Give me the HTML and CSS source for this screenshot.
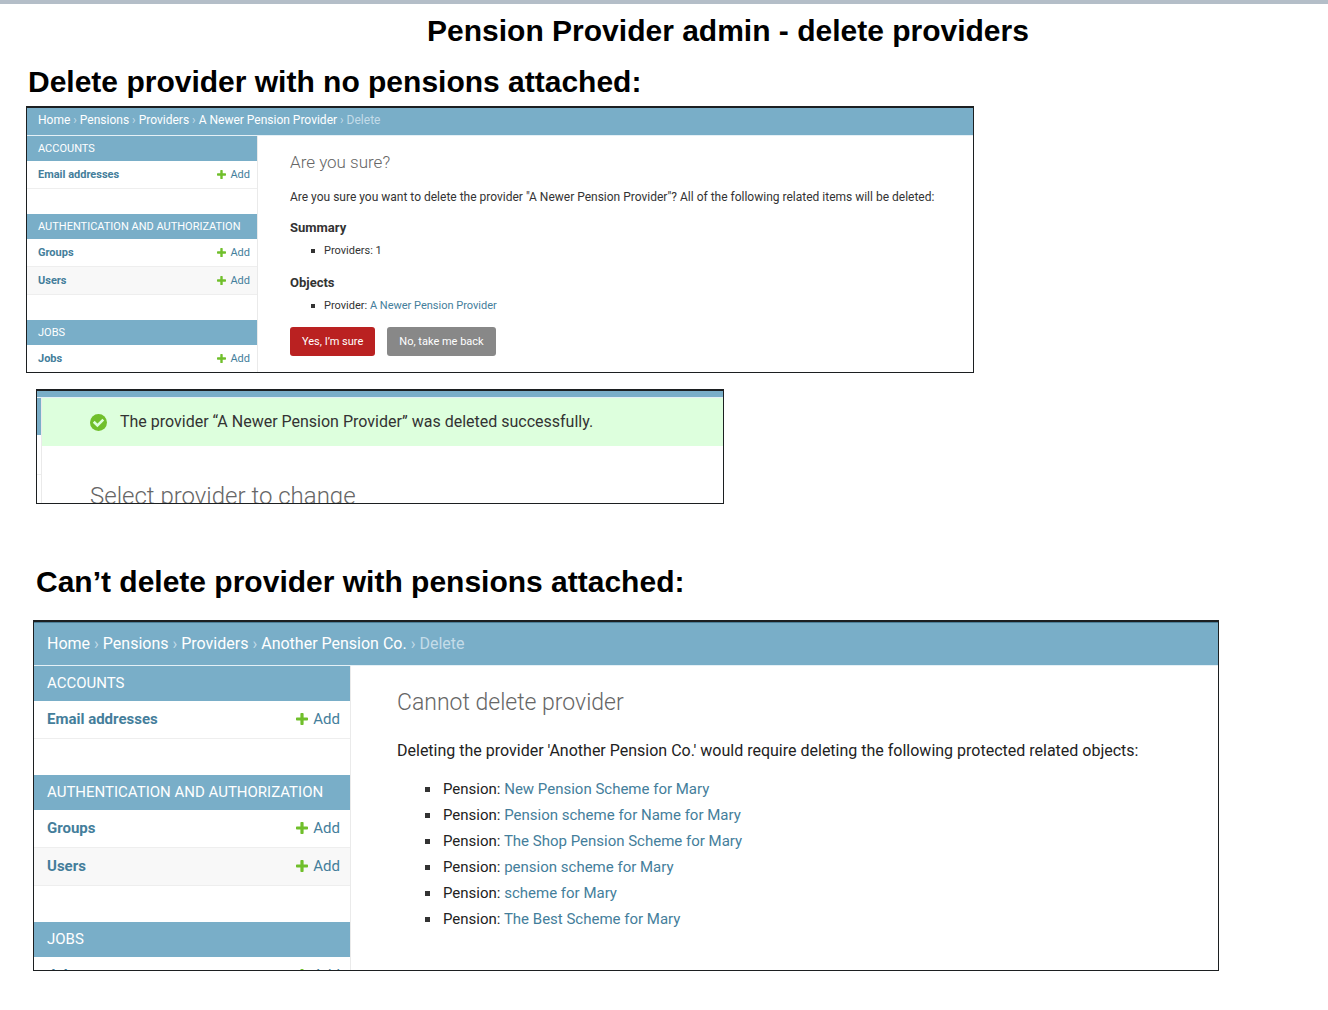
FILE: index.html
```html
<!DOCTYPE html>
<html lang="en">
<head>
<meta charset="utf-8">
<title>Pension Provider admin - delete providers</title>
<link rel="stylesheet" href="styles.css">
</head>
<body>
<svg class="sprite" aria-hidden="true">
  <symbol id="plus" viewBox="0 0 12 12"><path d="M4.4 0.8Q4.4 0 5.2 0h1.6q.8 0 .8.8v3.6h3.6q.8 0 .8.8v1.6q0 .8-.8.8H7.6v3.6q0 .8-.8.8H5.2q-.8 0-.8-.8V7.6H.8Q0 7.600 0 6.800V5.200q0-.8.8-.8h3.600z" fill="#70bf2b"/></symbol>
  <symbol id="tick" viewBox="0 0 16 16"><circle cx="8" cy="8" r="8" fill="#70bf2b"/><path d="M3.500 7.300l3.500 3.500 5.500-5.500" fill="none" stroke="#dfd" stroke-width="2.400"/></symbol>
</svg>
<header class="page-head"><h1 class="title">Pension Provider admin - delete providers</h1></header>
<main class="page">
  <h2 class="heading heading-first">Delete provider with no pensions attached:</h2>

  <section class="shot shot-confirm">
    <nav class="crumbs"><a href="#">Home</a> › <a href="#">Pensions</a> › <a href="#">Providers</a> › <a href="#">A Newer Pension Provider</a> › Delete</nav>
    <div class="columns">
      <nav class="side">
        <h3 class="app">ACCOUNTS</h3>
        <ul class="models">
          <li class="model"><a class="name" href="#">Email addresses</a><a class="add" href="#"><svg class="plus"><use href="#plus"/></svg>Add</a></li>
        </ul>
        <h3 class="app">AUTHENTICATION AND AUTHORIZATION</h3>
        <ul class="models">
          <li class="model"><a class="name" href="#">Groups</a><a class="add" href="#"><svg class="plus"><use href="#plus"/></svg>Add</a></li>
          <li class="model"><a class="name" href="#">Users</a><a class="add" href="#"><svg class="plus"><use href="#plus"/></svg>Add</a></li>
        </ul>
        <h3 class="app">JOBS</h3>
        <ul class="models">
          <li class="model"><a class="name" href="#">Jobs</a><a class="add" href="#"><svg class="plus"><use href="#plus"/></svg>Add</a></li>
        </ul>
      </nav>
      <div class="content">
        <h3 class="content-title">Are you sure?</h3>
        <p class="text">Are you sure you want to delete the provider "A Newer Pension Provider"? All of the following related items will be deleted:</p>
        <h4 class="subhead">Summary</h4>
        <ul class="items"><li>Providers: 1</li></ul>
        <h4 class="subhead">Objects</h4>
        <ul class="items"><li>Provider: <a href="#">A Newer Pension Provider</a></li></ul>
        <div class="actions">
          <button class="button danger" type="button">Yes, I’m sure</button>
          <button class="button" type="button">No, take me back</button>
        </div>
      </div>
    </div>
  </section>

  <section class="shot shot-success">
    <div class="bar"></div>
    <div class="columns">
      <div class="sliver"><div class="sliver-app"></div><div class="sliver-row"></div></div>
      <div class="result">
        <p class="message"><svg class="tick"><use href="#tick"/></svg>The provider “A Newer Pension Provider” was deleted successfully.</p>
        <h3 class="result-title">Select provider to change</h3>
      </div>
    </div>
  </section>

  <h2 class="heading heading-second">Can’t delete provider with pensions attached:</h2>

  <section class="shot shot-blocked">
    <nav class="crumbs"><a href="#">Home</a> › <a href="#">Pensions</a> › <a href="#">Providers</a> › <a href="#">Another Pension Co.</a> › Delete</nav>
    <div class="columns">
      <nav class="side">
        <h3 class="app">ACCOUNTS</h3>
        <ul class="models">
          <li class="model"><a class="name" href="#">Email addresses</a><a class="add" href="#"><svg class="plus"><use href="#plus"/></svg>Add</a></li>
        </ul>
        <h3 class="app">AUTHENTICATION AND AUTHORIZATION</h3>
        <ul class="models">
          <li class="model"><a class="name" href="#">Groups</a><a class="add" href="#"><svg class="plus"><use href="#plus"/></svg>Add</a></li>
          <li class="model"><a class="name" href="#">Users</a><a class="add" href="#"><svg class="plus"><use href="#plus"/></svg>Add</a></li>
        </ul>
        <h3 class="app">JOBS</h3>
        <ul class="models">
          <li class="model"><a class="name" href="#">Jobs</a><a class="add" href="#"><svg class="plus"><use href="#plus"/></svg>Add</a></li>
        </ul>
      </nav>
      <div class="content">
        <h3 class="content-title">Cannot delete provider</h3>
        <p class="text">Deleting the provider 'Another Pension Co.' would require deleting the following protected related objects:</p>
        <ul class="items">
          <li>Pension: <a href="#">New Pension Scheme for Mary</a></li>
          <li>Pension: <a href="#">Pension scheme for Name for Mary</a></li>
          <li>Pension: <a href="#">The Shop Pension Scheme for Mary</a></li>
          <li>Pension: <a href="#">pension scheme for Mary</a></li>
          <li>Pension: <a href="#">scheme for Mary</a></li>
          <li>Pension: <a href="#">The Best Scheme for Mary</a></li>
        </ul>
      </div>
    </div>
  </section>
</main>
</body>
</html>
```
FILE: styles.css
```css
* { box-sizing: border-box; margin: 0; padding: 0; }
body { background: #fff; color: #333; font-family: Roboto, "Liberation Sans", sans-serif; }
a { color: #447e9b; text-decoration: none; }
ul { list-style: none; }
.sprite { display: none; }

.page-head { border-top: 4px solid #b4bec8; padding: 9px 0 0 128px; }
.title, .heading {
  color: #000;
  font-family: "Liberation Sans", Arial, sans-serif;
  font-size: 30px;
  font-weight: 700;
  line-height: 36px;
}
.title { text-align: center; }
.page { padding: 15px 26px 40px; }
.heading-first { padding-left: 2px; margin-bottom: 6px; }
.heading-second { margin: 60px 0 20px 10px; }

.shot { border: solid #1c1f21; border-width: 2px 1px 1px; overflow: hidden; }
.columns { display: flex; align-items: stretch; }

.crumbs { background: #79aec8; color: #c4dce8; border-bottom: 1px solid #e4f0f6; }
.crumbs a { color: #fff; }
.side { flex: none; border-right: 1px solid #eaeaea; }
.app { background: #79aec8; color: #fff; font-weight: 400; }
.model { display: flex; align-items: center; justify-content: space-between; border-bottom: 1px solid #eee; }
.model:nth-child(even) { background: #f8f8f8; }
.name { font-weight: 700; }
.add { display: flex; align-items: center; }
.content { flex: 1; min-width: 0; }
.content-title, .result-title { color: #666; font-weight: 300; }
.items li { position: relative; }
.items li::before { content: ""; position: absolute; background: #333; }

/* Confirmation page, small scale */
.shot-confirm { max-width: 948px; max-height: 267px; font-size: 11px; }
.shot-confirm .crumbs { padding: 0 11px 2px; font-size: 12px; line-height: 25px; }
.shot-confirm .side { width: 231px; }
.shot-confirm .app { padding: 0 11px; font-size: 11px; line-height: 25px; }
.shot-confirm .model { height: 28px; padding: 0 7px 0 11px; }
.shot-confirm .models { margin-bottom: 25px; }
.shot-confirm .add { gap: 4px; }
.shot-confirm .plus { width: 9px; height: 9px; }
.shot-confirm .content { padding: 16px 32px 0; }
.shot-confirm .content-title { font-size: 17px; line-height: 20px; margin-bottom: 16px; }
.shot-confirm .text { font-size: 12px; line-height: 18px; }
.shot-confirm .subhead { font-size: 13px; line-height: 18px; margin: 13px 0 5px; }
.shot-confirm .items { padding-left: 34px; line-height: 18px; margin-bottom: 14px; }
.shot-confirm .items li::before { width: 4px; height: 4px; left: -13px; top: 7px; }
.actions { display: flex; gap: 12px; margin-top: -2px; }
.button {
  background: #888;
  border: 0;
  border-radius: 3px;
  color: #fff;
  font: 400 11px/29px Roboto, "Liberation Sans", sans-serif;
  padding: 0 12px;
}
.danger { background: #ba2121; }

/* Success message, cropped page */
.shot-success { max-width: 688px; height: 115px; margin: 16px 0 0 10px; }
.bar { height: 7px; background: #79aec8; border-bottom: 1px solid #e4f0f6; }
.sliver { width: 5px; flex: none; border-right: 1px solid #eaeaea; }
.sliver-app { height: 37px; background: #79aec8; }
.sliver-row { height: 40px; border-bottom: 1px solid #eee; }
.result { flex: 1; }
.message { display: flex; align-items: center; gap: 13px; background: #dfd; padding-left: 48px; font-size: 16px; line-height: 48px; }
.tick { width: 17px; height: 17px; }
.result-title { font-size: 24px; line-height: 30px; padding: 35px 48px 0; }

/* Protected objects page, large scale */
.shot-blocked { max-width: 1186px; height: 351px; margin-left: 7px; font-size: 15px; }
.shot-blocked .crumbs { padding: 0 13px; font-size: 16px; line-height: 42px; border-top: 1px solid #4d7f98; }
.shot-blocked .side { width: 317px; }
.shot-blocked .app { padding: 0 13px; font-size: 15px; line-height: 35px; }
.shot-blocked .model { height: 38px; padding: 0 10px 2px 13px; }
.shot-blocked .models { margin-bottom: 36px; }
.shot-blocked .add { gap: 5px; }
.shot-blocked .plus { width: 12px; height: 12px; }
.shot-blocked .content { padding: 22px 46px 0; }
.shot-blocked .content-title { font-size: 23px; line-height: 30px; margin-bottom: 20px; }
.shot-blocked .text { font-size: 16px; line-height: 26px; margin-bottom: 12px; color: #222; }
.shot-blocked .items { padding-left: 46px; line-height: 26px; color: #222; }
.shot-blocked .items li::before { width: 5px; height: 5px; left: -18px; top: 11px; }
```
